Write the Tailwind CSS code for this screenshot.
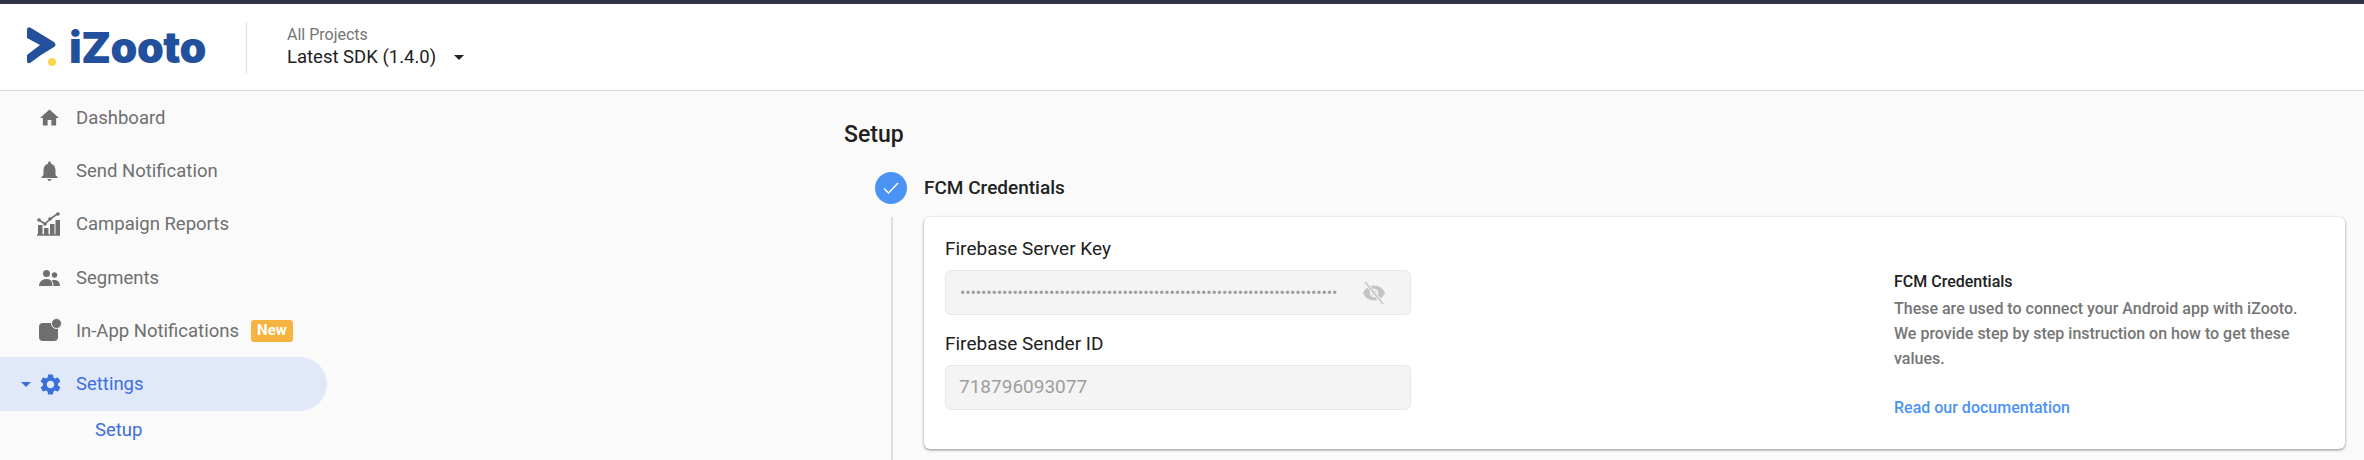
<!DOCTYPE html>
<html lang="en">
<head>
    <meta charset="UTF-8">
    <title>iZooto - Setup</title>
    <script src="https://cdn.jsdelivr.net/npm/@tailwindcss/browser@4"></script>
</head>
<body class="bg-[#fafafa] font-[Roboto,sans-serif] overflow-hidden">
    <div class="h-[460px] flex flex-col">
        <!-- Top bar -->
        <div class="h-[4px] bg-[#2f3547]"></div>

        <!-- Header -->
        <header class="h-[87px] flex items-center bg-white border-b border-[#dddddd]">
            <div class="w-[246px] flex items-center pl-[27px] gap-[12px]">
                <div class="relative w-[30px] h-[40px]">
                    <svg width="30" height="40" viewBox="0 0 30 40">
                        <path d="M0 3 Q0 -1 4 1 L27 15 Q30 18 27 20 L14 28 L3 36 Q0 37 0 34 L0 28 L13 18 L0 11 Z" fill="#22509c"/>
                    </svg>
                    <span class="absolute left-[21px] top-[31px] w-[8px] h-[8px] rounded-full bg-[#f9d64a]"></span>
                </div>
                <span class="font-['Inter',sans-serif] font-black text-[#22509c] text-[43px] leading-none tracking-[-0.5px]">iZooto</span>
            </div>
            <div class="w-px h-[51px] bg-[#dddddd]"></div>
            <div class="ml-[40px]">
                <div class="text-[16px] leading-[20px] text-[#757575]">All Projects</div>
                <div class="flex items-center text-[18.5px] leading-[24px] text-[#212121]">
                    Latest SDK (1.4.0)
                    <span class="ml-[18px] w-0 h-0 border-x-[5px] border-x-transparent border-t-[5px] border-t-[#212121]"></span>
                </div>
            </div>
        </header>

        <div class="flex flex-1">
            <!-- Sidebar -->
            <nav class="w-[327px] shrink-0 text-[18.5px] text-[#6f6f6f]">
                <a class="h-[53px] flex items-center pl-[40px] gap-[17px]">
                    <svg class="w-[19px] h-[19px] fill-[#6f6f6f]" viewBox="2 3 20 17"><path d="M10 20v-6h4v6h5v-8h3L12 3 2 12h3v8z"/></svg>
                    <span class="pt-[2px]">Dashboard</span>
                </a>
                <a class="h-[53px] flex items-center pl-[40px] gap-[17px]">
                    <svg class="w-[19px] h-[20px] fill-[#6f6f6f]" viewBox="4 2 16 20"><path d="M12 22c1.100 0 2-.9 2-2h-4c0 1.100.9 2 2 2zm6-6v-5c0-3.070-1.630-5.640-4.500-6.320V4c0-.83-.67-1.500-1.500-1.500s-1.500.67-1.500 1.500v.68C7.640 5.360 6 7.920 6 11v5l-2 2v1h16v-1l-2-2z"/></svg>
                    <span class="pt-[2px]">Send Notification</span>
                </a>
                <a class="h-[54px] flex items-center pl-[37px] gap-[16px]">
                    <svg class="w-[23px] h-[24px]" viewBox="0 0 23 24">
                        <path d="M0 23h23" stroke="#6f6f6f" stroke-width="1.500"/>
                        <path d="M1 13h4.500v10H1zM7 16h4.500v7H7zM13 12h4.500v11H13zM18.500 8H23v15h-4.500z" fill="#6f6f6f"/>
                        <path d="M2 8l6 4 5-5 8-5.500" stroke="#6f6f6f" stroke-width="1.600" fill="none"/>
                        <circle cx="2" cy="8" r="1.800" fill="#6f6f6f"/>
                        <circle cx="8" cy="12" r="1.800" fill="#6f6f6f"/>
                        <circle cx="13" cy="7" r="1.800" fill="#6f6f6f"/>
                        <circle cx="21" cy="2" r="1.800" fill="#6f6f6f"/>
                    </svg>
                    <span class="pt-[2px]">Campaign Reports</span>
                </a>
                <a class="h-[53px] flex items-center pl-[39px] gap-[16px]">
                    <svg class="w-[21px] h-[16px]" viewBox="0 0 21 16" fill="#6f6f6f">
                        <circle cx="7.500" cy="3.500" r="3.500"/>
                        <circle cx="15.500" cy="5" r="2.700"/>
                        <path d="M0 16c0-4 3-7 7.500-7 3 0 5 1.200 5.500 3.500l.5 3.500z"/>
                        <path d="M14.500 16c0-2-.5-4-1.700-5.500 .8-.4 1.800-.5 2.700-.5 3 0 5.500 2 5.500 6z"/>
                    </svg>
                    <span class="pt-[2px]">Segments</span>
                </a>
                <a class="h-[53px] flex items-center pl-[39px]">
                    <span class="relative block w-[20px] h-[20px] mr-[17px]">
                        <span class="absolute left-0 top-[2px] w-[19px] h-[18px] rounded-[4px] bg-[#6f6f6f]"></span>
                        <span class="absolute right-[-3px] top-[-3px] w-[9px] h-[9px] rounded-full bg-[#6f6f6f] border border-[#fafafa] box-content"></span>
                    </span>
                    <span class="pt-[2px]">In-App Notifications</span>
                    <span class="ml-[12px] w-[42px] h-[22px] flex items-center justify-center rounded-[3px] bg-[#f5b33f] text-white text-[15px] font-bold">New</span>
                </a>
                <a class="h-[54px] flex items-center pl-[21px] bg-[#e1e9f8] rounded-r-[27px] text-[#3a6fe0]">
                    <span class="w-0 h-0 border-x-[5px] border-x-transparent border-t-[5px] border-t-[#3a6fe0] mr-[9px]"></span>
                    <svg class="w-[21px] h-[21px] fill-[#3a6fe0] mr-[15px]" viewBox="2 2 20 20"><path d="M19.140 12.940c.04-.3.06-.61.06-.94 0-.32-.02-.64-.07-.94l2.030-1.580a.49.49 0 0 0 .12-.61l-1.920-3.320a.488.488 0 0 0-.59-.22l-2.390.96c-.5-.38-1.030-.7-1.620-.94l-.36-2.540a.484.484 0 0 0-.48-.41h-3.840c-.24 0-.43.17-.47.41l-.36 2.540c-.59.24-1.130.57-1.620.94l-2.390-.96c-.22-.08-.47 0-.59.22L2.740 8.870c-.12.21-.08.47.12.61l2.030 1.580c-.05.3-.09.63-.09.94s.02.64.07.94l-2.030 1.580a.49.49 0 0 0-.12.61l1.920 3.320c.12.22.37.29.59.22l2.390-.96c.5.38 1.030.7 1.620.94l.36 2.540c.05.24.24.41.48.41h3.840c.24 0 .44-.17.47-.41l.36-2.540c.59-.24 1.130-.56 1.620-.94l2.390.96c.22.08.47 0 .59-.22l1.920-3.320c.12-.22.07-.47-.12-.61l-2.010-1.580zM12 15.600c-1.980 0-3.600-1.620-3.600-3.600s1.620-3.600 3.600-3.600 3.600 1.620 3.600 3.600-1.620 3.600-3.600 3.600z"/></svg>
                    <span class="pt-[2px]">Settings</span>
                </a>
                <a class="h-[38px] flex items-center pl-[95px] pt-[2px] text-[#3a6fe0]">Setup</a>
            </nav>

            <!-- Main -->
            <main class="flex-1 pl-[517px] pr-[19px]">
                <h1 class="pt-[30px] text-[23px] leading-[27px] font-medium text-[#212121]">Setup</h1>
                <div class="mt-[24px] ml-[31px] flex items-center gap-[17px]">
                    <span class="w-[32px] h-[32px] rounded-full bg-[#4a93f5] flex items-center justify-center">
                        <svg class="w-[18px] h-[18px]" viewBox="0 0 18 18" fill="none" stroke="#ffffff" stroke-width="1.500"><path d="M2 9.500l4.500 4.500L16 4"/></svg>
                    </span>
                    <span class="text-[19px] font-medium text-[#212121]">FCM Credentials</span>
                </div>
                <div class="mt-[13px] ml-[47px] h-[243px] pl-[31px] border-l-2 border-[#dddddd]">
                    <div class="h-[232px] flex justify-between bg-white rounded-[6px] shadow-[0_1px_3px_rgba(0,0,0,0.45)] pl-[21px]">
                        <div class="w-[466px] pt-[21px]">
                            <label class="block text-[19px] leading-[22px] text-[#212121]">Firebase Server Key</label>
                            <div class="mt-[10px] h-[45px] flex items-center justify-between pl-[14px] pr-[24px] bg-[#f4f4f4] border border-[#e8e8e8] rounded-[6px]">
                                <span class="text-[16px] tracking-[-0.160px] text-[#9e9e9e]">••••••••••••••••••••••••••••••••••••••••••••••••••••••••••••••••••••••••</span>
                                <svg class="w-[24px] h-[24px]" viewBox="0 0 24 24">
                                    <path d="M12 4.500C7 4.500 2.730 7.610 1 12c1.730 4.390 6 7.500 11 7.500s9.270-3.110 11-7.500c-1.730-4.390-6-7.500-11-7.500z" fill="#c4c4c4"/>
                                    <circle cx="12" cy="12" r="4.200" fill="#f4f4f4"/>
                                    <circle cx="12" cy="12" r="2.400" fill="#c4c4c4"/>
                                    <path d="M3 1l18 22" stroke="#f4f4f4" stroke-width="3.500"/>
                                    <path d="M3 1l18 22" stroke="#c4c4c4" stroke-width="1.500"/>
                                </svg>
                            </div>
                            <label class="block mt-[18px] text-[19px] leading-[22px] text-[#212121]">Firebase Sender ID</label>
                            <div class="mt-[10px] h-[45px] flex items-center pl-[13px] bg-[#f4f4f4] border border-[#e8e8e8] rounded-[6px] text-[19px] text-[#9e9e9e]">718796093077</div>
                        </div>
                        <div class="w-[451px] pt-[54px]">
                            <div class="text-[16px] leading-[22px] font-medium text-[#212121]">FCM Credentials</div>
                            <p class="mt-[3px] w-[410px] text-[16px] leading-[25px] font-medium text-[#757575]">These are used to connect your Android app with iZooto. We provide step by step instruction on how to get these values.</p>
                            <a class="block mt-[24px] text-[16px] leading-[25px] font-medium text-[#4a93f5]">Read our documentation</a>
                        </div>
                    </div>
                </div>
            </main>
        </div>
    </div>
</body>
</html>
